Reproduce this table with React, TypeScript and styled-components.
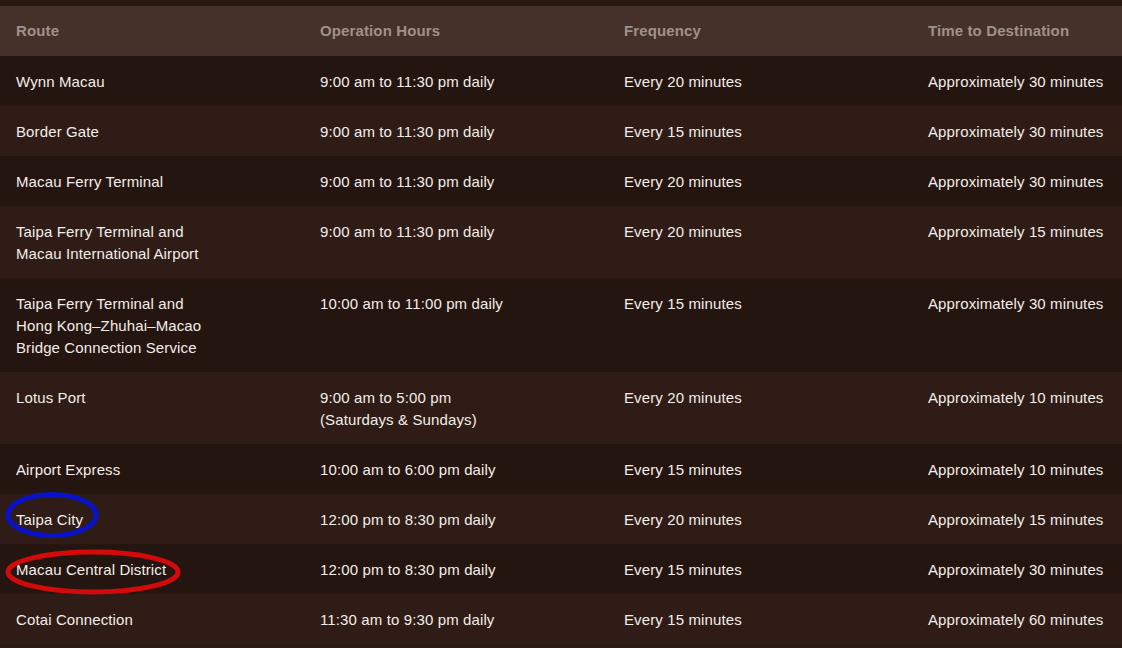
import styled, { createGlobalStyle } from "styled-components";

interface Shuttle {
    route: string[];
    hours: string[];
    frequency: string;
    duration: string;
}

const shuttles: Shuttle[] = [
    { route: ["Wynn Macau"], hours: ["9:00 am to 11:30 pm daily"], frequency: "Every 20 minutes", duration: "Approximately 30 minutes" },
    { route: ["Border Gate"], hours: ["9:00 am to 11:30 pm daily"], frequency: "Every 15 minutes", duration: "Approximately 30 minutes" },
    { route: ["Macau Ferry Terminal"], hours: ["9:00 am to 11:30 pm daily"], frequency: "Every 20 minutes", duration: "Approximately 30 minutes" },
    { route: ["Taipa Ferry Terminal and", "Macau International Airport"], hours: ["9:00 am to 11:30 pm daily"], frequency: "Every 20 minutes", duration: "Approximately 15 minutes" },
    { route: ["Taipa Ferry Terminal and", "Hong Kong\u2013Zhuhai\u2013Macao", "Bridge Connection Service"], hours: ["10:00 am to 11:00 pm daily"], frequency: "Every 15 minutes", duration: "Approximately 30 minutes" },
    { route: ["Lotus Port"], hours: ["9:00 am to 5:00 pm", "(Saturdays & Sundays)"], frequency: "Every 20 minutes", duration: "Approximately 10 minutes" },
    { route: ["Airport Express"], hours: ["10:00 am to 6:00 pm daily"], frequency: "Every 15 minutes", duration: "Approximately 10 minutes" },
    { route: ["Taipa City"], hours: ["12:00 pm to 8:30 pm daily"], frequency: "Every 20 minutes", duration: "Approximately 15 minutes" },
    { route: ["Macau Central District"], hours: ["12:00 pm to 8:30 pm daily"], frequency: "Every 15 minutes", duration: "Approximately 30 minutes" },
    { route: ["Cotai Connection"], hours: ["11:30 am to 9:30 pm daily"], frequency: "Every 15 minutes", duration: "Approximately 60 minutes" },
];

function Lines({ lines }: { lines: string[] }) {
    return (
        <>
            {lines.map((line, i) => (
                <span key={i}>
                    {line}
                    {i < lines.length - 1 && <br />}
                </span>
            ))}
        </>
    );
}

function App() {
    return (
        <>
            <GlobalStyle />
            <Page>
                <Table>
                    <colgroup>
                        <col width={304} />
                        <col width={304} />
                        <col width={304} />
                        <col />
                    </colgroup>
                    <thead>
                        <tr>
                            <Th>Route</Th>
                            <Th>Operation Hours</Th>
                            <Th>Frequency</Th>
                            <Th>Time to Destination</Th>
                        </tr>
                    </thead>
                    <tbody>
                        {shuttles.map((s, i) => (
                            <Row key={i} odd={i % 2 === 1}>
                                <Td>
                                    <Lines lines={s.route} />
                                </Td>
                                <Td>
                                    <Lines lines={s.hours} />
                                </Td>
                                <Td>{s.frequency}</Td>
                                <Td>{s.duration}</Td>
                            </Row>
                        ))}
                    </tbody>
                </Table>
                {/* hand-drawn annotation marks */}
                <Marks width="1122" height="648" viewBox="0 0 1122 648">
                    <ellipse cx="52" cy="515" rx="44" ry="20.5" fill="none" stroke="#0a12c8" strokeWidth="5" />
                    <ellipse cx="93" cy="572" rx="85" ry="20" fill="none" stroke="#d20a0a" strokeWidth="5" />
                </Marks>
            </Page>
        </>
    );
}

const GlobalStyle = createGlobalStyle`
    html, body {
        margin: 0;
        padding: 0;
        background: #2a1813;
        overflow: hidden;
    }
`;

const Page = styled.div`
    position: relative;
    width: 1122px;
    height: 648px;
    padding-top: 6px;
    box-sizing: border-box;
    background: #2a1813;
    font-family: "Liberation Sans", Arial, sans-serif;
    font-size: 15px;
    letter-spacing: 0.12px;
    overflow: hidden;
`;

const Table = styled.table`
    width: 100%;
    border-collapse: collapse;
    table-layout: fixed;
`;

const Th = styled.th`
    background: #45302a;
    color: #a0908a;
    font-weight: 700;
    text-align: left;
    line-height: 22px;
    padding: 14px 16px;
    white-space: nowrap;
`;

const Row = styled.tr<{ odd: boolean }>`
    background: ${(props) => (props.odd ? "#2f1c16" : "#251510")};
`;

const Td = styled.td`
    color: #f2ede9;
    vertical-align: top;
    line-height: 22px;
    padding: 15px 16px 13px;
    white-space: nowrap;
`;

const Marks = styled.svg`
    position: absolute;
    left: 0;
    top: 0;
    pointer-events: none;
`;

export default App;
